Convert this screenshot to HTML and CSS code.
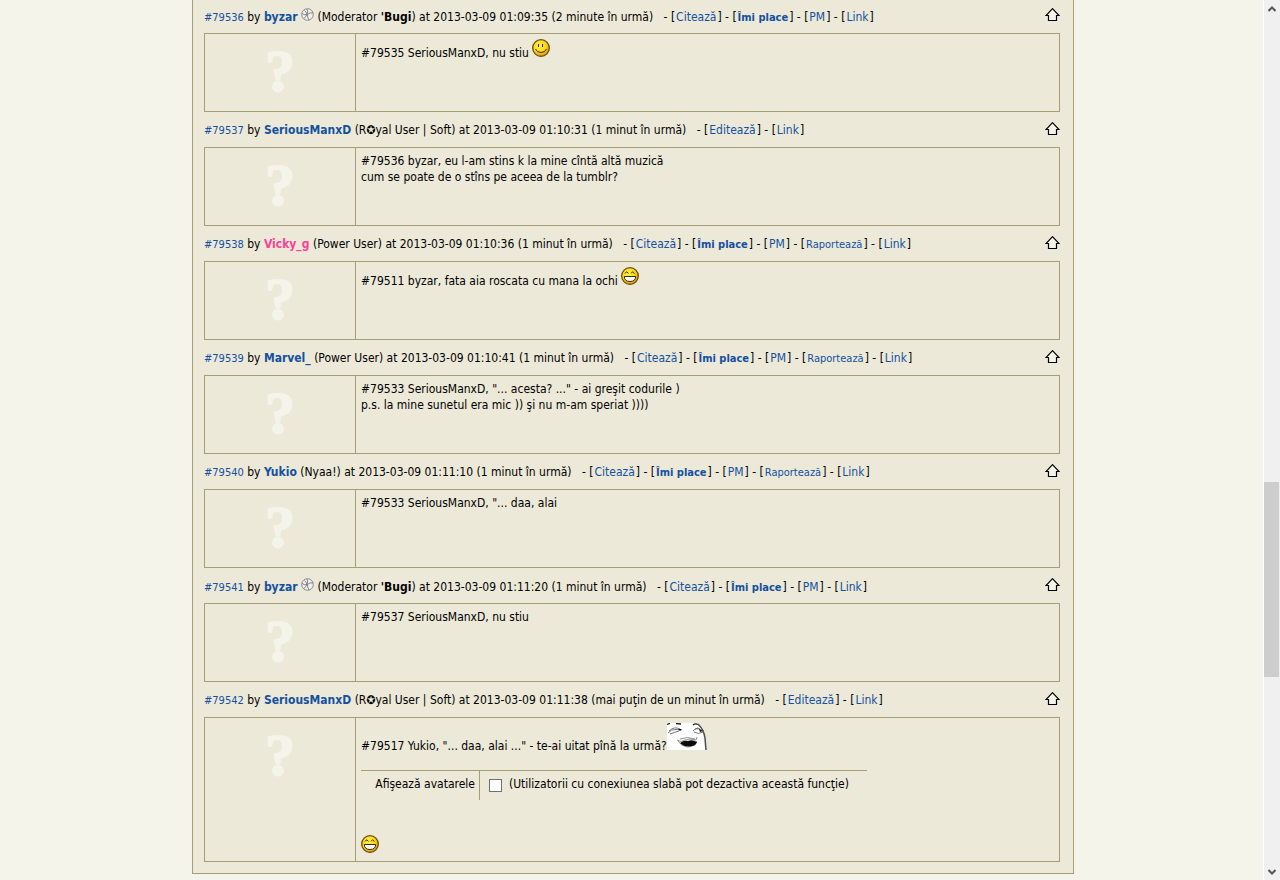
FILE: index.html
```html
<!DOCTYPE html>
<html lang="ro">
<head>
    <meta charset="UTF-8">
    <title>Forum</title>
    <link rel="stylesheet" href="styles.css">
</head>
<body>

<svg class="sprites" aria-hidden="true">
    <defs>
        <radialGradient id="yellow" cx="40%" cy="35%" r="65%">
            <stop offset="0" stop-color="#fff14a"/>
            <stop offset="0.6" stop-color="#fbd916"/>
            <stop offset="1" stop-color="#e09a08"/>
        </radialGradient>
    </defs>
    <symbol id="up" viewBox="0 0 15 13">
        <path d="M7.5 0.7 L14 7.5 H11.5 V12.5 H3.5 V7.5 H1 Z" fill="#f4f4eb" stroke="#000" stroke-width="1.2"/>
    </symbol>
    <symbol id="smile" viewBox="0 0 18 18">
        <circle cx="9" cy="9" r="8.3" fill="url(#yellow)" stroke="#6b4a10" stroke-width="1.3"/>
        <path d="M6.5 5 V8 M10.5 5 V8" stroke="#3a2a00" fill="none"/>
        <path d="M3.5 10 Q5 13.5 9 13.5 Q13 13.5 14.5 10" stroke="#3a2a00" fill="none"/>
    </symbol>
    <symbol id="grin" viewBox="0 0 18 18">
        <circle cx="9" cy="9" r="8.3" fill="url(#yellow)" stroke="#6b4a10" stroke-width="1.3"/>
        <path d="M4 6.5 L5.5 4.8 L7.5 6.3 M10 6.3 L11.5 4.8 L13.5 6.5" stroke="#3a2a00" fill="none"/>
        <path d="M3.3 9.5 H14.7 Q14.5 14.5 9 14.5 Q3.5 14.5 3.3 9.5 Z" fill="#fff" stroke="#3a2a00"/>
    </symbol>
    <symbol id="wheel" viewBox="0 0 13 13">
        <circle cx="6.5" cy="6.5" r="5.8" fill="#efeff0" stroke="#8a8a8a"/>
        <path d="M1 5.5 Q4 7.500 6 6.500 Q7.500 4 6 1 M12 5 Q9 4 6.500 6.500 Q6 8.500 8 12 M3.500 2.500 Q5.500 4 6 6.500 Q4.500 9 3 10.500" fill="none" stroke="#777" stroke-width="0.9"/>
    </symbol>
    <symbol id="face" viewBox="0 0 40 27">
        <path d="M0 0 H31 Q39 9 39.5 27 H0 Z" fill="#fff"/>
        <path d="M31 1 Q37 7 38 15 Q38.5 21 39 27" fill="none" stroke="#555" stroke-width="1.6"/>
        <path d="M0 1.5 L3 0.5 M9 0.5 L14 1 M26 2 Q28 0 31 1.5" fill="none" stroke="#222" stroke-width="1.3"/>
        <path d="M1 10 Q4 6 9 6.5 L14 7 M3 11 Q8 9 12 8 M2 8 Q7 3 13 6 M26 8 Q29 4 34 7 L37 8 M27 9 Q31 12 36 9 M28 6 Q31 4 33 6" fill="none" stroke="#555" stroke-width="0.8"/>
        <path d="M11 6 L15 6 L13 8 Z M32 6 L36 8 L33 9 Z" fill="#111"/>
        <path d="M10 17 Q14 20 18 17 Q23 15 29 17 L30 14 M11 18 Q14 23 20 24 Q27 24 30 18 M13 16 Q20 13 28 16" fill="none" stroke="#777" stroke-width="0.8"/>
        <path d="M13 20 Q17 17 21 18 Q25 16 30 19 Q29 23 23 23.5 Q17 24 13 20 Z" fill="#0b0b0b"/>
    </symbol>
    <symbol id="chevron" viewBox="0 0 8 6">
        <path d="M0.5 5 L4 1.5 L7.5 5" fill="none" stroke="#555" stroke-width="2"/>
    </symbol>
</svg>

<div class="page">
<main class="content">
<div class="posts">

    <div class="post-head">
        <div><a class="num" href="#79536">#79536</a> by <a class="user" href="#">byzar</a> <svg class="wheel"><use href="#wheel"/></svg> (Moderator <b>'Bugi</b>) at 2013-03-09 01:09:35 (2 minute în urmă) <span class="actions">- [<a href="#">Citează</a>] - [<a class="like" href="#">Îmi place</a>] - [<a href="#">PM</a>] - [<a href="#">Link</a>]</span></div>
        <a class="up" href="#top" aria-label="Sus"><svg><use href="#up"/></svg></a>
    </div>
    <div class="post">
        <div class="avatar">?</div>
        <div class="message">#79535 SeriousManxD, nu stiu <svg class="smiley"><use href="#smile"/></svg></div>
    </div>

    <div class="post-head">
        <div><a class="num" href="#79537">#79537</a> by <a class="user" href="#">SeriousManxD</a> (R✪yal User | Soft) at 2013-03-09 01:10:31 (1 minut în urmă) <span class="actions">- [<a href="#">Editează</a>] - [<a href="#">Link</a>]</span></div>
        <a class="up" href="#top" aria-label="Sus"><svg><use href="#up"/></svg></a>
    </div>
    <div class="post">
        <div class="avatar">?</div>
        <div class="message">#79536 byzar, eu l-am stins k la mine cîntă altă muzică<br>cum se poate de o stîns pe aceea de la tumblr?</div>
    </div>

    <div class="post-head">
        <div><a class="num" href="#79538">#79538</a> by <a class="user pink" href="#">Vicky_g</a> (Power User) at 2013-03-09 01:10:36 (1 minut în urmă) <span class="actions">- [<a href="#">Citează</a>] - [<a class="like" href="#">Îmi place</a>] - [<a href="#">PM</a>] - [<a class="report" href="#">Raportează</a>] - [<a href="#">Link</a>]</span></div>
        <a class="up" href="#top" aria-label="Sus"><svg><use href="#up"/></svg></a>
    </div>
    <div class="post">
        <div class="avatar">?</div>
        <div class="message">#79511 byzar, fata aia roscata cu mana la ochi <svg class="smiley"><use href="#grin"/></svg></div>
    </div>

    <div class="post-head">
        <div><a class="num" href="#79539">#79539</a> by <a class="user" href="#">Marvel_</a> (Power User) at 2013-03-09 01:10:41 (1 minut în urmă) <span class="actions">- [<a href="#">Citează</a>] - [<a class="like" href="#">Îmi place</a>] - [<a href="#">PM</a>] - [<a class="report" href="#">Raportează</a>] - [<a href="#">Link</a>]</span></div>
        <a class="up" href="#top" aria-label="Sus"><svg><use href="#up"/></svg></a>
    </div>
    <div class="post">
        <div class="avatar">?</div>
        <div class="message">#79533 SeriousManxD, "... acesta? ..." - ai greşit codurile )<br>p.s. la mine sunetul era mic )) şi nu m-am speriat ))))</div>
    </div>

    <div class="post-head">
        <div><a class="num" href="#79540">#79540</a> by <a class="user" href="#">Yukio</a> (Nyaa!) at 2013-03-09 01:11:10 (1 minut în urmă) <span class="actions">- [<a href="#">Citează</a>] - [<a class="like" href="#">Îmi place</a>] - [<a href="#">PM</a>] - [<a class="report" href="#">Raportează</a>] - [<a href="#">Link</a>]</span></div>
        <a class="up" href="#top" aria-label="Sus"><svg><use href="#up"/></svg></a>
    </div>
    <div class="post">
        <div class="avatar">?</div>
        <div class="message">#79533 SeriousManxD, "... daa, alai</div>
    </div>

    <div class="post-head">
        <div><a class="num" href="#79541">#79541</a> by <a class="user" href="#">byzar</a> <svg class="wheel"><use href="#wheel"/></svg> (Moderator <b>'Bugi</b>) at 2013-03-09 01:11:20 (1 minut în urmă) <span class="actions">- [<a href="#">Citează</a>] - [<a class="like" href="#">Îmi place</a>] - [<a href="#">PM</a>] - [<a href="#">Link</a>]</span></div>
        <a class="up" href="#top" aria-label="Sus"><svg><use href="#up"/></svg></a>
    </div>
    <div class="post">
        <div class="avatar">?</div>
        <div class="message">#79537 SeriousManxD, nu stiu</div>
    </div>

    <div class="post-head">
        <div><a class="num" href="#79542">#79542</a> by <a class="user" href="#">SeriousManxD</a> (R✪yal User | Soft) at 2013-03-09 01:11:38 (mai puţin de un minut în urmă) <span class="actions">- [<a href="#">Editează</a>] - [<a href="#">Link</a>]</span></div>
        <a class="up" href="#top" aria-label="Sus"><svg><use href="#up"/></svg></a>
    </div>
    <div class="post">
        <div class="avatar">?</div>
        <div class="message">
            #79517 Yukio, "... daa, alai ..." - te-ai uitat pînă la urmă?<svg class="face"><use href="#face"/></svg>
            <table class="settings">
                <tr>
                    <th><label for="avatars">Afişează avatarele</label></th>
                    <td><input type="checkbox" id="avatars"><label for="avatars">(Utilizatorii cu conexiunea slabă pot dezactiva această funcţie)</label></td>
                </tr>
            </table>
            <svg class="smiley"><use href="#grin"/></svg>
        </div>
    </div>

</div>
</main>

<div class="scrollbar">
    <svg><use href="#chevron"/></svg>
    <div class="track"><div class="thumb"></div></div>
    <svg class="down"><use href="#chevron"/></svg>
</div>
</div>

</body>
</html>
```
FILE: styles.css
```css
body {
    margin: 0;
    background: #f4f4eb;
    color: #000;
    font-family: "DejaVu Sans Condensed", "DejaVu Sans", sans-serif;
    font-size: 12px;
    line-height: 16px;
}
a {
    color: #1450a0;
    text-decoration: none;
}
.sprites {
    position: absolute;
    width: 0;
    height: 0;
}
.page {
    display: flex;
    height: 100vh;
    overflow: hidden;
}
.content {
    flex: 1;
    padding: 0 189px 0 192px;
}

/* posts */
.posts {
    padding: 0 13px 11px 11px;
    margin-top: -2px;
    background: #ece9d8;
    border: 1px solid #a89e75;
    border-top: 0;
}
.post-head {
    display: flex;
    align-items: center;
    justify-content: space-between;
    height: 35px;
    white-space: nowrap;
}
.post-head div {
    padding-top: 2px;
}
.num, .like, .report {
    font-size: 11px;
}
.user, .like {
    font-weight: bold;
}
.pink {
    color: #ff3e96;
}
.actions {
    margin-left: 7px;
}
.actions a {
    padding: 0 1px;
}
.wheel {
    width: 13px;
    height: 13px;
}
.up {
    padding-bottom: 2px;
}
.up svg {
    display: block;
    width: 15px;
    height: 13px;
}
.post {
    display: flex;
    min-height: 77px;
    border: 1px solid #a89e75;
}
.avatar {
    width: 150px;
    padding-top: 7px;
    border-right: 1px solid #a89e75;
    color: #f4f4eb;
    font: bold 60px/60px "Liberation Serif", serif;
    text-align: center;
    -webkit-text-stroke: 2px #f4f4eb;
}
.message {
    flex: 1;
    padding: 5px 5px 4px;
}
.smiley {
    width: 18px;
    height: 18px;
}
.face {
    width: 40px;
    height: 27px;
}

.settings {
    width: 506px;
    margin: 16px 0 35px;
    border-collapse: collapse;
    border-top: 1px solid #a89e75;
}
.settings th, .settings td {
    height: 19px;
    padding: 5px 4px;
    font-weight: normal;
    text-align: right;
    vertical-align: top;
}
.settings th {
    width: 110px;
    border-right: 1px solid #a89e75;
}
.settings td {
    padding-left: 9px;
    text-align: left;
}
.settings input {
    appearance: none;
    width: 13px;
    height: 13px;
    margin: 0 7px 0 0;
    background: #fff;
    border: 1px solid #707070;
    vertical-align: -4px;
}
.settings input:checked {
    background: #1450a0;
}

/* scrollbar */
.scrollbar {
    display: flex;
    flex-direction: column;
    align-items: center;
    width: 16px;
    background: #f0f0f0;
    border-left: 1px solid #fff;
}
.scrollbar svg {
    width: 8px;
    height: 6px;
    margin: 6px 0 5px;
}
.scrollbar .down {
    transform: rotate(180deg);
}
.track {
    flex: 1;
    align-self: stretch;
}
.thumb {
    width: 15px;
    height: 23%;
    margin-top: 465px;
    background: #cdcdcd;
}
```
